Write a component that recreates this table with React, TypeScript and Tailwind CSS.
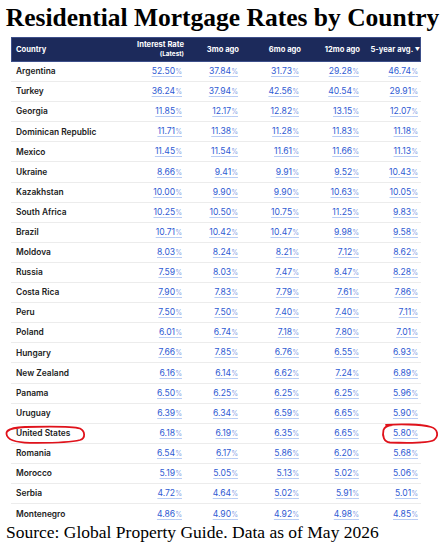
const rows: [string, string, string, string, string, string][] = [
  ["Argentina", "52.50", "37.84", "31.73", "29.28", "46.74"],
  ["Turkey", "36.24", "37.94", "42.56", "40.54", "29.91"],
  ["Georgia", "11.85", "12.17", "12.82", "13.15", "12.07"],
  ["Dominican Republic", "11.71", "11.38", "11.28", "11.83", "11.18"],
  ["Mexico", "11.45", "11.54", "11.61", "11.66", "11.13"],
  ["Ukraine", "8.66", "9.41", "9.91", "9.52", "10.43"],
  ["Kazakhstan", "10.00", "9.90", "9.90", "10.63", "10.05"],
  ["South Africa", "10.25", "10.50", "10.75", "11.25", "9.83"],
  ["Brazil", "10.71", "10.42", "10.47", "9.98", "9.58"],
  ["Moldova", "8.03", "8.24", "8.21", "7.12", "8.62"],
  ["Russia", "7.59", "8.03", "7.47", "8.47", "8.28"],
  ["Costa Rica", "7.90", "7.83", "7.79", "7.61", "7.86"],
  ["Peru", "7.50", "7.50", "7.40", "7.40", "7.11"],
  ["Poland", "6.01", "6.74", "7.18", "7.80", "7.01"],
  ["Hungary", "7.66", "7.85", "6.76", "6.55", "6.93"],
  ["New Zealand", "6.16", "6.14", "6.62", "7.24", "6.89"],
  ["Panama", "6.50", "6.25", "6.25", "6.25", "5.96"],
  ["Uruguay", "6.39", "6.34", "6.59", "6.65", "5.90"],
  ["United States", "6.18", "6.19", "6.35", "6.65", "5.80"],
  ["Romania", "6.54", "6.17", "5.86", "6.20", "5.68"],
  ["Morocco", "5.19", "5.05", "5.13", "5.02", "5.06"],
  ["Serbia", "4.72", "4.64", "5.02", "5.91", "5.01"],
  ["Montenegro", "4.86", "4.90", "4.92", "4.98", "4.85"],
];

const grid = "grid grid-cols-[110px_64px_56px_61px_60px_59px] items-center";

function Rate({ value }: { value: string }) {
  return (
    <span className="justify-self-end pr-[3px] text-[8.6px] text-[#2f5bd3] underline decoration-[#b9cdf4] decoration-1 underline-offset-[2px]">
      {value}
      <span className="text-[7px] text-[#86a3e6]">%</span>
    </span>
  );
}

export default function App() {
  return (
    <div className="relative w-[445px] h-[547px] bg-white overflow-hidden">
      <h1 className="h-[37px] pt-[5px] text-center text-[25.5px] leading-none font-bold text-black font-['Liberation_Serif',serif]">
        Residential Mortgage Rates by Country
      </h1>

      <div className="ml-[11px] w-[410px] font-['Inter','Liberation_Sans',sans-serif]">
        <div className={`${grid} h-[25px] bg-[#1c2a5b] border border-[#3d4f8a] text-white font-bold text-[7.6px]`}>
          <span className="pl-[4px]">Country</span>
          <span className="justify-self-end pr-[2px] text-right leading-[9px]">
            Interest Rate
            <br />
            <span className="text-[6.4px]">(Latest)</span>
          </span>
          <span className="justify-self-end pr-[3px]">3mo ago</span>
          <span className="justify-self-end pr-[2px]">6mo ago</span>
          <span className="justify-self-end pr-[3px]">12mo ago</span>
          <span className="justify-self-end pr-[2px]">
            5-year avg. <span className="text-[5px] align-middle">▼</span>
          </span>
        </div>

        {rows.map(([country, ...vals]) => (
          <div key={country} className={`${grid} h-[20.1px] border-b border-[#ececec] last:border-b-0`}>
            <span className="pl-[5px] text-[8.4px] font-semibold text-[#222]">{country}</span>
            {vals.map((v, i) => (
              <Rate key={i} value={v} />
            ))}
          </div>
        ))}
      </div>

      <p className="pl-[6px] text-[17.5px] leading-none text-black font-['Liberation_Serif',serif]">
        Source: Global Property Guide. Data as of May 2026
      </p>

      <svg className="absolute inset-0 pointer-events-none" width="445" height="547" viewBox="0 0 445 547" fill="none">
        <path
          d="M20 427.5 C12 428 6 430 6.5 434 C7 439 12 442.5 30 442.8 C50 443 72 442 80 440 C86 438 85 431 80 428.5 C72 426 45 426.5 25 427 C17 427.3 10 428.5 8 431"
          stroke="#e0121b"
          strokeWidth="1.8"
          strokeLinecap="round"
        />
        <path
          d="M386 425 C398 424 420 424 431 427 C438 429 439 436 434 440 C428 443.5 405 443 390 442.5 C384 442 382 436 383.5 430 C384.5 427 387 425.5 392 425"
          stroke="#e0121b"
          strokeWidth="1.8"
          strokeLinecap="round"
        />
      </svg>
    </div>
  );
}
